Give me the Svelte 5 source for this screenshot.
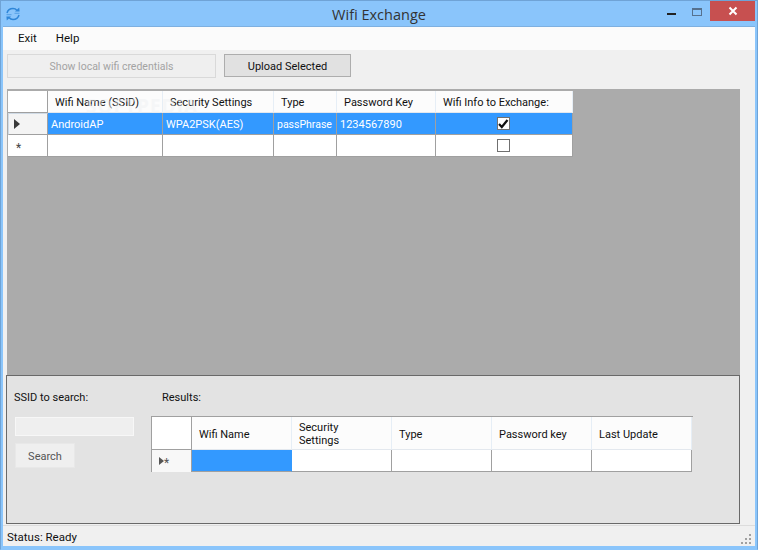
<script>
  const topCols = [
    { label: 'Wifi Name (SSID)', width: 115 },
    { label: 'Security Settings', width: 111 },
    { label: 'Type', width: 63 },
    { label: 'Password Key', width: 99 },
    { label: 'Wifi Info to Exchange:', width: 137 }
  ];
  const resultCols = ['Wifi Name', 'Security\nSettings', 'Type', 'Password key', 'Last Update'];
  const dots = [[8,0],[4,4],[8,4],[0,8],[4,8],[8,8]];
</script>

<div class="window">
  <header class="titlebar">
    <svg class="appicon" width="16" height="16" viewBox="0 0 16 16" fill="none" stroke="#2f86d8" stroke-width="1.500">
      <path d="M2 7C2.800 4 5 2.500 8 2.500c1.800 0 3 .7 3.800 1.700" />
      <path d="M10 5.600h4.600l-.4-4z" fill="#2f86d8" stroke="none" />
      <path d="M14 9c-.8 3-3 4.500-6 4.500-1.800 0-3-.7-3.800-1.700" />
      <path d="M6 10.400H1.400l.4 4z" fill="#2f86d8" stroke="none" />
      <path d="M1.500 8.700h5M9.500 7.300h5" stroke-width="1" opacity=".6" />
    </svg>
    <span class="title">Wifi Exchange</span>
    <div class="controls">
      <span class="min"></span>
      <span class="max"></span>
      <span class="close">
        <svg width="10" height="10" viewBox="0 0 10 10" stroke="#fff" stroke-width="2"><path d="M1.500 1.500l7 7M8.500 1.500l-7 7" /></svg>
      </span>
    </div>
  </header>

  <div class="client">
    <nav class="menu"><span>Exit</span><span>Help</span></nav>

    <div class="toolbar">
      <button class="btn local" disabled>Show local wifi credentials</button>
      <button class="btn upload">Upload Selected</button>
    </div>

    <section class="gridarea">
      <div class="table top">
        <div class="row head">
          <div class="rh"></div>
          {#each topCols as c}<div class="cell hc" style="width:{c.width}px">{c.label}</div>{/each}
        </div>
        <div class="row sel">
          <div class="rh"><svg width="6" height="10" viewBox="0 0 6 10"><path d="M0 0l6 5-6 5z" fill="#3a3a3a" /></svg></div>
          <div class="cell" style="width:115px">AndroidAP</div>
          <div class="cell" style="width:111px">WPA2PSK(AES)</div>
          <div class="cell tight" style="width:63px">passPhrase</div>
          <div class="cell" style="width:99px">1234567890</div>
          <div class="cell chk" style="width:137px"><span class="box"><svg width="11" height="10" viewBox="0 0 11 10" fill="none" stroke="#111" stroke-width="2.200"><path d="M1 5l2.800 3L9.500 1" /></svg></span></div>
        </div>
        <div class="row">
          <div class="rh star">*</div>
          <div class="cell" style="width:115px"></div>
          <div class="cell" style="width:111px"></div>
          <div class="cell" style="width:63px"></div>
          <div class="cell" style="width:99px"></div>
          <div class="cell chk" style="width:137px"><span class="box"></span></div>
        </div>
        <span class="mark">SOFTPEDIA</span>
      </div>
    </section>

    <section class="panel">
      <div class="search">
        <label for="ssid">SSID to search:</label>
        <input id="ssid" disabled />
        <button class="btn find" disabled>Search</button>
      </div>
      <div class="results">
        <div class="reslabel">Results:</div>
        <div class="table res">
          <div class="row head">
            <div class="rh"></div>
            {#each resultCols as c}<div class="cell hc">{c}</div>{/each}
          </div>
          <div class="row">
            <div class="rh new">
              <svg width="5" height="8" viewBox="0 0 5 8"><path d="M0 0l5 4-5 4z" fill="#555" /></svg><span>*</span>
            </div>
            <div class="cell blue"></div>
            <div class="cell"></div><div class="cell"></div><div class="cell"></div><div class="cell"></div>
          </div>
        </div>
      </div>
    </section>

    <footer class="status">
      <span>Status: Ready</span>
      <svg class="grip" width="11" height="11" viewBox="0 0 11 11">
        {#each dots as d}<rect x={d[0]} y={d[1]} width="2" height="2" fill="#a0a0a0" />{/each}
      </svg>
    </footer>
  </div>
</div>

<style>
  :global(body) { margin: 0; }
  .window {
    width: 758px; height: 550px; box-sizing: border-box;
    background: #8ac5fb; border: 1px solid #6fa3d6; border-bottom-color: #8ac5fb;
    display: flex; flex-direction: column; padding: 0 2px 3px 2px;
    font: 11px Roboto, sans-serif; color: #111;
    overflow: hidden;
  }
  .titlebar { height: 25px; flex: none; display: flex; align-items: center; justify-content: center; position: relative; }
  .appicon { position: absolute; left: 2px; top: 5px; }
  .title { font-size: 14.500px; color: #333; font-family: "Open Sans", sans-serif; margin-top: 2px; }
  .controls { position: absolute; right: 0; top: 0; display: flex; }
  .min { position: absolute; right: 79px; top: 12px; width: 9px; height: 2px; background: #222; }
  .max { position: absolute; right: 53px; top: 7px; width: 8px; height: 5px; border: 1px solid #56718e; border-top-width: 2px; }
  .close { width: 45px; height: 20px; background: #c75050; display: flex; align-items: center; justify-content: center; }

  .client { flex: 1; display: flex; flex-direction: column; background: #f0f0f0; border-top: 1px solid #7eb0e0; }
  .menu { height: 23px; flex: none; background: #fbfbfb; display: flex; align-items: center; padding: 0 0 1px 15px; box-sizing: border-box; gap: 19px; font-size: 11.500px; }
  .toolbar { display: flex; gap: 8px; padding: 4px 0 0 4px; height: 39px; flex: none; box-sizing: border-box; align-items: flex-start; }
  .btn { font: inherit; padding: 1px 0 0; box-sizing: border-box; }
  .local { width: 209px; height: 24px; background: #efefef; border: 1px solid #d9d9d9; color: #a3a3a3; font-size: 10.500px; }
  .upload { width: 127px; height: 23px; background: #e1e1e1; border: 1px solid #adadad; color: #111; }

  .gridarea { height: 286px; flex: none; margin: 0 15px 0 4px; background: #ababab; padding: 2px 0 0 1px; box-sizing: border-box; }
  .table { position: relative; }
  .top { width: 565px; }
  .row { display: flex; }
  .rh { background: #fff; box-sizing: border-box; flex: none; display: flex; align-items: center; justify-content: flex-start; border-right: 1px solid #a0a0a0; border-bottom: 1px solid #a0a0a0; }
  .cell { box-sizing: border-box; flex: none; background: #fff; display: flex; align-items: center; border-right: 1px solid #a0a0a0; border-bottom: 1px solid #a0a0a0; padding: 1px 0 0 3px; white-space: pre-line; }
  .top .rh { width: 40px; height: 22px; }
  .top .cell { height: 22px; }
  .cell.hc { background: #fcfcfc; padding-left: 7px; border-right-color: #e6eef6; border-bottom-color: #e3e8ee; }
  .sel .cell { background: #3399ff; color: #fff; }
  .sel .tight { font-size: 10.500px; }
  .sel .rh { background: #f4f4f4; border: 1px solid #d0dbe6; border-right-color: #a0a0a0; border-bottom-color: #a0a0a0; padding-left: 5px; }
  .top .star { font-size: 12px; padding: 5px 0 0 8px; color: #444; }
  .cell.chk { justify-content: center; padding: 0 2px 0 0; }
  .box { width: 13px; height: 13px; box-sizing: border-box; border: 1px solid #707070; background: #fff; display: flex; align-items: center; justify-content: center; }
  .mark { position: absolute; left: 78px; top: 2px; font: bold 19px "Open Sans", sans-serif; letter-spacing: 1px; color: #eef0f2; opacity: .45; pointer-events: none; }

  .panel { height: 149px; flex: none; margin: 0 15px 0 3px; box-sizing: border-box; background: #e3e3e3; border: 1px solid #696969; display: flex; }
  .search { width: 144px; flex: none; padding: 14px 0 0 7px; box-sizing: border-box; display: flex; flex-direction: column; align-items: flex-start; }
  .search label { line-height: 16px; }
  .search input { width: 119px; height: 19px; margin: 11px 0 7px 1px; box-sizing: border-box; background: #efefef; border: 1px solid #f7f7f7; padding: 0; }
  .find { width: 60px; height: 25px; margin-left: 1px; background: #efefef; border: 1px solid #e8e8e8; color: #555; }
  .reslabel { padding: 14px 0 0 11px; height: 40px; box-sizing: border-box; line-height: 16px; }
  .res { border-top: 1px solid #a0a0a0; border-left: 1px solid #a0a0a0; width: 541px; }
  .res .rh { width: 40px; }
  .res .head .rh, .res .head .cell { height: 33px; }
  .res .row:last-child .rh, .res .row:last-child .cell { height: 22px; }
  .res .cell { width: 100px; }
  .res .rh.new { background: #f8f8f8; color: #555; justify-content: flex-start; padding-left: 7px; border-bottom: none; }
  .new span { font-size: 12px; line-height: 1; padding-top: 3px; }
  .blue { background: #3399ff; border-right-color: #3399ff; }
  .res .head .cell { line-height: 13px; padding-top: 2px; }

  .status { flex: 1; margin-top: 1px; border-top: 1px solid #dcdcdc; display: flex; align-items: center; padding: 2px 0 0 4px; position: relative; font-size: 11.500px; }
  .grip { position: absolute; right: 3px; bottom: 1px; }
</style>
